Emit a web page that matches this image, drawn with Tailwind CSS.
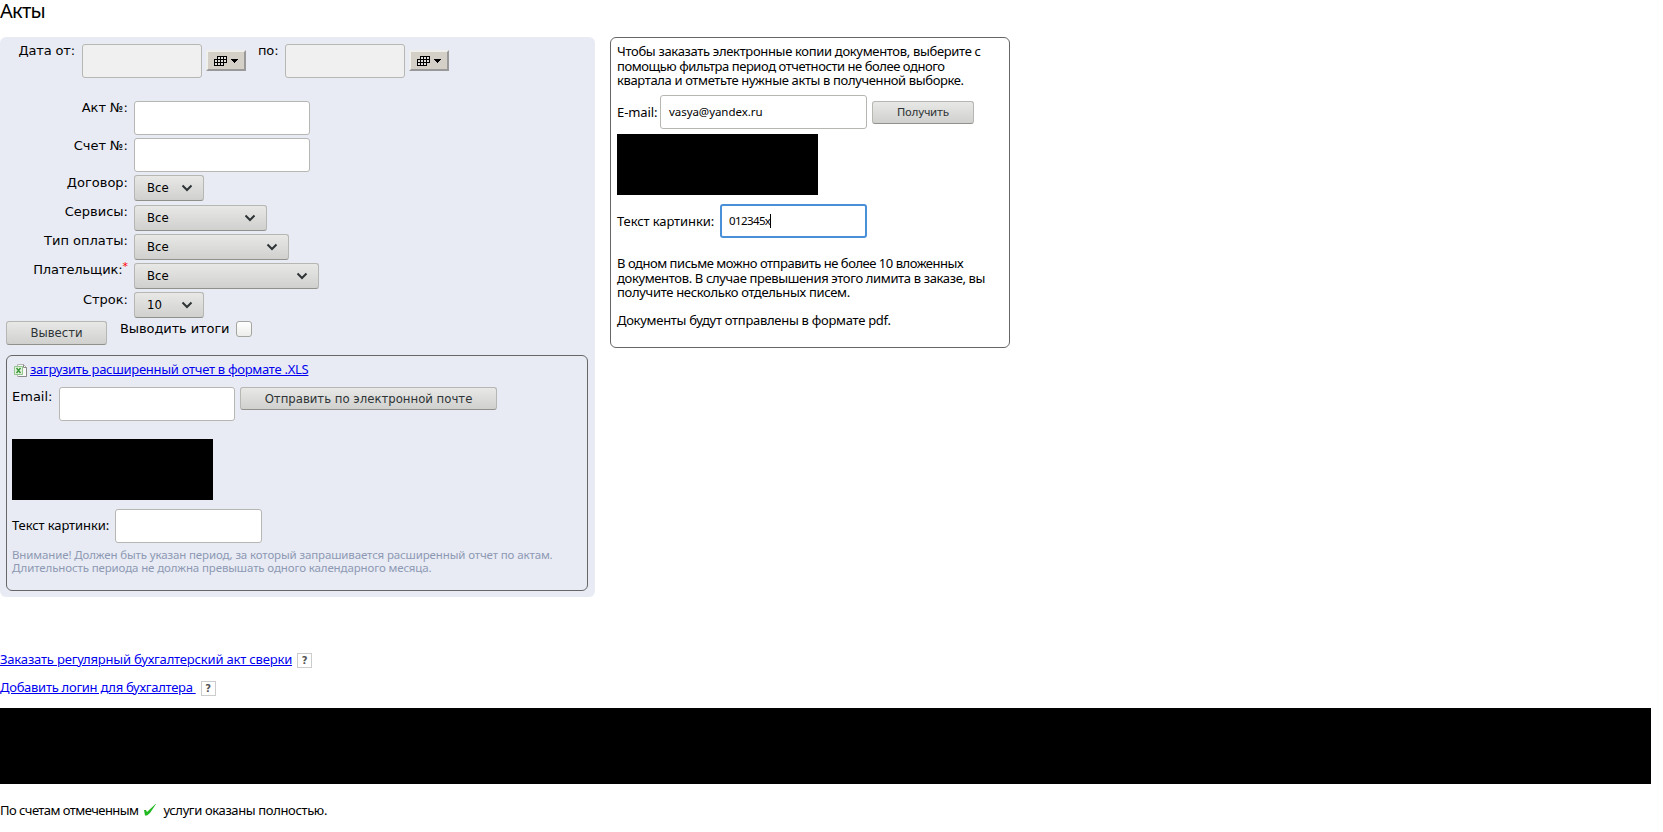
<!DOCTYPE html>
<html lang="ru">
<head>
<meta charset="utf-8">
<title>Акты</title>
<script src="https://cdn.jsdelivr.net/npm/@tailwindcss/browser@4"></script>
</head>
<body class="bg-white text-black font-['Noto_Sans',sans-serif] text-[13px] leading-[14.67px] h-[832px] overflow-hidden">
<h1 class="h-[37px] text-[20px] leading-[22px] tracking-[-0.7px]">Акты</h1>
<div class="flex items-start gap-[15px]">
  <form class="w-[595px] h-[560px] rounded-[6px] bg-[#e8ebf3] pt-[7px] px-[6px] font-['DejaVu_Sans',sans-serif] text-[13px] leading-[15px]">
    <div class="flex h-[57px] items-start">
      <label class="w-[69px] text-right -mt-px tracking-[-0.15px]">Дата от:</label>
      <div class="ml-[7px] w-[120px] h-[34px] rounded-[3px] border border-[#b6b6b3] bg-[#f0f0f0]"></div>
      <div class="ml-1 mt-[6px] w-10 h-[21px] bg-[#d4d0c8] border-2 border-t-[#efefeb] border-l-[#efefeb] border-b-[#999] border-r-[#999]"><svg class="block" width="36" height="17" shape-rendering="crispEdges"><path d="M9 4h10v7h-3v3H6V7h3z" fill="#000"/><path d="M10 5h2v2h-2zM13 5h2v2h-2zM16 5h2v2h-2zM7 8h2v2H7zM10 8h2v2h-2zM13 8h2v2h-2zM16 8h2v2h-2zM7 11h2v2H7zM10 11h2v2h-2zM13 11h2v2h-2z" fill="#e2dfda"/><path d="M23 7h7v1h-1v1h-1v1h-1v1h-1v-1h-1V9h-1V8h-1z"/></svg></div>
      <label class="ml-3 w-[20px] -mt-px tracking-[-0.15px]">по:</label>
      <div class="ml-[7px] w-[120px] h-[34px] rounded-[3px] border border-[#b6b6b3] bg-[#f0f0f0]"></div>
      <div class="ml-1 mt-[6px] w-10 h-[21px] bg-[#d4d0c8] border-2 border-t-[#efefeb] border-l-[#efefeb] border-b-[#999] border-r-[#999]"><svg class="block" width="36" height="17" shape-rendering="crispEdges"><path d="M9 4h10v7h-3v3H6V7h3z" fill="#000"/><path d="M10 5h2v2h-2zM13 5h2v2h-2zM16 5h2v2h-2zM7 8h2v2H7zM10 8h2v2h-2zM13 8h2v2h-2zM16 8h2v2h-2zM7 11h2v2H7zM10 11h2v2h-2zM13 11h2v2h-2z" fill="#e2dfda"/><path d="M23 7h7v1h-1v1h-1v1h-1v1h-1v-1h-1V9h-1V8h-1z"/></svg></div>
    </div>
    <div class="flex h-[37px]"><label class="w-[122px] text-right -mt-px">Акт №:</label><div class="ml-[6px] w-[176px] h-[34px] rounded-[3px] border border-[#b6b6b3] bg-white"></div></div>
    <div class="flex h-[37px]"><label class="w-[122px] text-right">Счет №:</label><div class="ml-[6px] w-[176px] h-[34px] rounded-[3px] border border-[#b6b6b3] bg-white"></div></div>
    <div class="flex h-[30px]"><label class="w-[122px] text-right">Договор:</label><div class="ml-[6px] w-[70px] h-[26px] rounded-[3px] border border-[#b6b6b3] border-b-[#91918c] bg-linear-to-b from-[#e8e8e7] to-[#d0d0ce] flex items-center justify-between pl-3 pr-[10px] pb-px font-['DejaVu_Sans_Condensed','DejaVu_Sans',sans-serif] font-stretch-condensed"><span>Все</span><svg width="12" height="8" fill="none" stroke="#2e3436" stroke-width="2"><path d="M1.5 1.5L6 6l4.500-4.500"/></svg></div></div>
    <div class="flex h-[29px]"><label class="w-[122px] text-right -mt-px">Сервисы:</label><div class="ml-[6px] w-[133px] h-[26px] rounded-[3px] border border-[#b6b6b3] border-b-[#91918c] bg-linear-to-b from-[#e8e8e7] to-[#d0d0ce] flex items-center justify-between pl-3 pr-[10px] pb-px font-['DejaVu_Sans_Condensed','DejaVu_Sans',sans-serif] font-stretch-condensed"><span>Все</span><svg width="12" height="8" fill="none" stroke="#2e3436" stroke-width="2"><path d="M1.5 1.5L6 6l4.500-4.500"/></svg></div></div>
    <div class="flex h-[29px]"><label class="w-[122px] text-right -mt-px">Тип оплаты:</label><div class="ml-[6px] w-[155px] h-[26px] rounded-[3px] border border-[#b6b6b3] border-b-[#91918c] bg-linear-to-b from-[#e8e8e7] to-[#d0d0ce] flex items-center justify-between pl-3 pr-[10px] pb-px font-['DejaVu_Sans_Condensed','DejaVu_Sans',sans-serif] font-stretch-condensed"><span>Все</span><svg width="12" height="8" fill="none" stroke="#2e3436" stroke-width="2"><path d="M1.5 1.5L6 6l4.500-4.500"/></svg></div></div>
    <div class="flex h-[29px]"><label class="w-[122px] flex justify-end -mt-px tracking-[-0.1px]">Плательщик:<span class="text-[11px] leading-[9px] text-[#ff0000]">*</span></label><div class="ml-[6px] w-[185px] h-[26px] rounded-[3px] border border-[#b6b6b3] border-b-[#91918c] bg-linear-to-b from-[#e8e8e7] to-[#d0d0ce] flex items-center justify-between pl-3 pr-[10px] pb-px font-['DejaVu_Sans_Condensed','DejaVu_Sans',sans-serif] font-stretch-condensed"><span>Все</span><svg width="12" height="8" fill="none" stroke="#2e3436" stroke-width="2"><path d="M1.5 1.5L6 6l4.500-4.500"/></svg></div></div>
    <div class="flex h-[29px]"><label class="w-[122px] text-right">Строк:</label><div class="ml-[6px] w-[70px] h-[26px] rounded-[3px] border border-[#b6b6b3] border-b-[#91918c] bg-linear-to-b from-[#e8e8e7] to-[#d0d0ce] flex items-center justify-between pl-3 pr-[10px] pb-px font-['DejaVu_Sans_Condensed','DejaVu_Sans',sans-serif] font-stretch-condensed"><span>10</span><svg width="12" height="8" fill="none" stroke="#2e3436" stroke-width="2"><path d="M1.5 1.5L6 6l4.500-4.500"/></svg></div></div>
    <div class="flex h-[34px] items-start">
      <div class="w-[101px] h-6 rounded-[3px] border border-[#b6b6b3] border-b-[#91918c] bg-linear-to-b from-[#e8e8e7] to-[#d0d0ce] text-[#2e3436] text-center text-[13px] leading-[22px] font-['DejaVu_Sans_Condensed','DejaVu_Sans',sans-serif] font-stretch-condensed">Вывести</div>
      <label class="ml-[13px] w-[116px] whitespace-nowrap tracking-[-0.1px]">Выводить итоги</label>
      <div class="w-4 h-4 rounded-[3px] border border-[#a5a5a0] bg-linear-to-b from-white to-[#ededeb]"></div>
    </div>
    <div class="w-[582px] h-[236px] rounded-[6px] border border-[#666] pl-[5px]">
      <div class="flex h-[31px] pt-[6px] font-['Noto_Sans',sans-serif]"><svg class="mt-[2px] ml-[2px] mr-[3px]" width="13" height="13"><path d="M3.500.5h6l3 3v9h-9z" fill="#f8f8f8" stroke="#b4b4b4"/><path d="M9.500.5v3h3M12.500 3.500v9h-8" fill="none" stroke="#8a8a8a"/><path d="M.5 2.500h8v8h-8z" fill="#e3f1df" stroke="#8fc48a"/><path d="M2.500 4l4 5M6.500 4l-4 5" stroke="#3f9a3c" stroke-width="1.500"/></svg><a class="text-[#0000ee] underline whitespace-nowrap tracking-[-0.28px]">загрузить расширенный отчет в формате .XLS</a></div>
      <div class="flex h-[52px] items-start"><label class="w-[47px] pt-[2px]">Email:</label><div class="w-[176px] h-[34px] rounded-[3px] border border-[#b6b6b3] bg-white"></div><div class="ml-[5px] w-[257px] h-[23px] rounded-[3px] border border-[#b6b6b3] border-b-[#91918c] bg-linear-to-b from-[#e8e8e7] to-[#d0d0ce] text-[#2e3436] text-center text-[13px] leading-[22px] font-['DejaVu_Sans_Condensed','DejaVu_Sans',sans-serif] font-stretch-condensed">Отправить по электронной почте</div></div>
      <div class="w-[201px] h-[61px] bg-black"></div>
      <div class="mt-[9px] flex h-[34px] items-center font-['Noto_Sans',sans-serif]"><label class="w-[103px] whitespace-nowrap tracking-[-0.1px] pb-px">Текст картинки:</label><div class="w-[147px] h-[34px] rounded-[3px] border border-[#b6b6b3] bg-white"></div></div>
      <p class="mt-[5px] font-['Noto_Sans',sans-serif] text-[11.500px] leading-[13px] tracking-[-0.13px] text-[#8d99b3] whitespace-nowrap">Внимание! Должен быть указан период, за который запрашивается расширенный отчет по актам.<br>Длительность периода не должна превышать одного календарного месяца.</p>
    </div>
  </form>
  <section class="w-[400px] h-[311px] rounded-[6px] border border-[#666] pl-[6px] pt-[6px] whitespace-nowrap">
    <p class="h-[51px]"><span class="tracking-[-0.33px]">Чтобы заказать электронные копии документов, выберите с</span><br><span class="tracking-[-0.45px]">помощью фильтра период отчетности не более одного</span><br><span class="tracking-[-0.37px]">квартала и отметьте нужные акты в полученной выборке.</span></p>
    <div class="flex h-[34px] items-center"><label class="w-[43px] tracking-[-0.1px]">E-mail:</label><div class="w-[207px] h-[34px] rounded-[3px] border border-[#b6b6b3] bg-white pl-2 text-[11.500px] leading-[32px] tracking-[-0.05px]">vasya@yandex.ru</div><div class="ml-[5px] w-[102px] h-[23px] rounded-[3px] border border-[#b6b6b3] border-b-[#91918c] bg-linear-to-b from-[#e8e8e7] to-[#d0d0ce] text-[#2e3436] text-center text-[11px] leading-[21px] tracking-[-0.4px] font-['DejaVu_Sans',sans-serif]">Получить</div></div>
    <div class="mt-[5px] w-[201px] h-[61px] bg-black"></div>
    <div class="mt-[9px] flex h-[34px] items-center"><label class="w-[103px] tracking-[-0.1px]">Текст картинки:</label><div class="w-[147px] h-[34px] rounded-[3px] border-2 border-[#4a90d9] bg-white pl-[7px] flex items-center text-[11.500px] tracking-[-0.6px]">012345x<span class="w-px h-[14px] bg-black"></span></div></div>
    <p class="mt-[18px]"><span class="tracking-[-0.47px]">В одном письме можно отправить не более 10 вложенных</span><br><span class="tracking-[-0.36px]">документов. В случае превышения этого лимита в заказе, вы</span><br><span class="tracking-[-0.32px]">получите несколько отдельных писем.</span></p>
    <p class="mt-[13px] tracking-[-0.29px]">Документы будут отправлены в формате pdf.</p>
  </section>
</div>
<div class="mt-[55px] h-[28px] flex items-start whitespace-nowrap"><a class="text-[#0000ee] underline tracking-[-0.18px]">Заказать регулярный бухгалтерский акт сверки</a><span class="ml-[5px] mt-px w-[15px] h-[15px] border border-[#ccc] text-[#555] text-[10px] leading-[14px] text-center font-bold font-['DejaVu_Sans',sans-serif]">?</span></div>
<div class="h-[28px] flex items-start whitespace-nowrap"><a class="text-[#0000ee] underline whitespace-pre tracking-[-0.28px]">Добавить логин для бухгалтера </a><span class="ml-[5px] mt-px w-[15px] h-[15px] border border-[#ccc] text-[#555] text-[10px] leading-[14px] text-center font-bold font-['DejaVu_Sans',sans-serif]">?</span></div>
<div class="w-[1651px] h-[76px] bg-black"></div>
<p class="mt-[19px] flex items-center whitespace-nowrap"><span class="tracking-[-0.56px]">По счетам отмеченным</span><svg class="ml-[6px] mr-[7px]" width="12" height="12"><path d="M0 6h2l1 2 8.500-8h.5L6 9l-3 2.500H1z" fill="#22b822"/></svg><span class="tracking-[-0.37px]">услуги оказаны полностью.</span></p>
</body>
</html>
